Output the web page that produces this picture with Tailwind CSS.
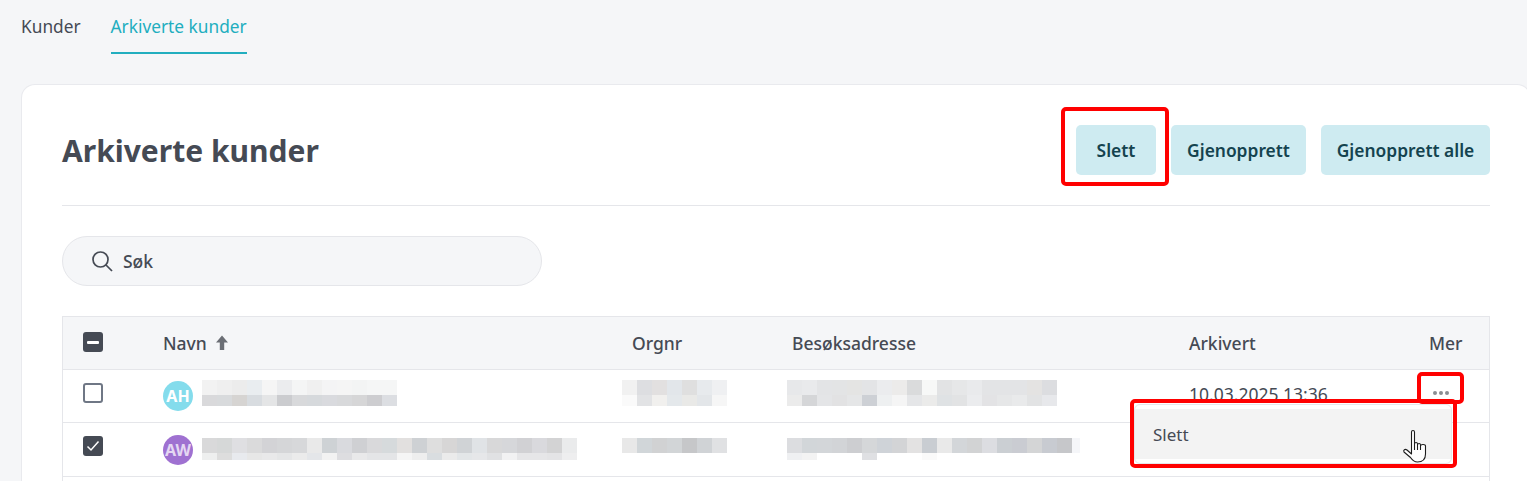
<!DOCTYPE html>
<html lang="nb">
<head>
    <meta charset="UTF-8">
    <title>Arkiverte kunder</title>
    <script src="https://cdn.jsdelivr.net/npm/@tailwindcss/browser@4"></script>
</head>
<body class="relative h-[481px] w-[1527px] overflow-hidden bg-[#f5f6f8] font-['Noto_Sans','Open_Sans',sans-serif] text-[#454a54]">
    <!-- Tabs -->
    <nav class="flex h-[54px] gap-[30px] pl-[21px] text-[17.3px]">
        <a class="pt-[15px] leading-[24px]">Kunder</a>
        <a class="border-b-2 border-[#22aebf] pt-[15px] leading-[24px] text-[#22aebf]">Arkiverte kunder</a>
    </nav>

    <!-- Card -->
    <main class="ml-[21px] mt-[30px] h-[397px] w-[1510px] rounded-t-[14px] border border-b-0 border-[#e9eaee] bg-white px-[40px]">
        <header class="flex h-[121px] items-start justify-between border-b border-[#e5e6ea] pt-[40px]">
            <h1 class="mt-[1px] text-[30px] font-bold leading-[50px]">Arkiverte kunder</h1>
            <div class="flex gap-[15px] text-[17.4px] font-semibold text-[#14434f]">
                <button class="h-[50px] w-[80px] rounded-[5px] bg-[#ceebf1]">Slett</button>
                <button class="h-[50px] w-[135px] rounded-[5px] bg-[#ceebf1]">Gjenopprett</button>
                <button class="h-[50px] w-[169px] rounded-[5px] bg-[#ceebf1]">Gjenopprett alle</button>
            </div>
        </header>

        <div class="mt-[30px] flex h-[50px] w-[480px] items-center rounded-full border border-[#e5e6ea] bg-[#f5f6f8] pl-[28px] text-[17.5px] font-medium">
            <svg class="h-[22px] w-[22px]" viewBox="0 0 22 22" fill="none" stroke="#454a54" stroke-width="1.7"><circle cx="9.5" cy="9.5" r="7.5"/><path d="M15 15l6 6"/></svg>
            <span class="ml-[10px]">Søk</span>
        </div>

        <!-- Table -->
        <section class="mt-[30px] border border-b-0 border-[#e5e6ea] text-[17.5px]">
            <div class="flex h-[53px] items-center border-b border-[#e5e6ea] bg-[#f5f6f8] font-medium">
                <div class="w-[100px] pb-[2px] pl-[20px]">
                    <span class="flex h-5 w-5 items-center justify-center rounded-[3px] bg-[#454a54]"><span class="h-[3px] w-[12px] rounded-[1px] bg-white"></span></span>
                </div>
                <div class="flex w-[469px] items-center">Navn
                    <svg class="ml-[8px] h-[16px] w-[14px]" viewBox="0 0 14 16" fill="#6b6e75"><path d="M7 .5l6 7H9.200V15H4.800V7.500H1z"/></svg>
                </div>
                <div class="w-[160px]">Orgnr</div>
                <div class="w-[397px]">Besøksadresse</div>
                <div class="w-[240px]">Arkivert</div>
                <div>Mer</div>
            </div>
            <div class="flex h-[53px] items-center border-b border-[#e5e6ea]">
                <div class="w-[100px] pb-[6px] pl-[20px]"><span class="block h-5 w-5 rounded-[3px] border-2 border-[#6f7785]"></span></div>
                <div class="flex w-[469px] items-center">
                    <span class="flex h-[30px] w-[30px] shrink-0 items-center justify-center rounded-full bg-[#84dcec] text-[16px] font-bold text-white">AH</span>
                    <div class="ml-[9px] -mt-[6px]" data-mosaic="1"></div>
                </div>
                <div class="w-[160px]"><div class="-ml-[10px] -mt-[6px]" data-mosaic="2"></div></div>
                <div class="w-[397px]"><div class="-ml-[5px] -mt-[6px]" data-mosaic="3"></div></div>
                <div class="w-[240px] pb-[4px]">10.03.2025 13:36</div>
                <div class="flex w-[23px] justify-center gap-[2px] pb-[7px]">
                    <span class="h-[4px] w-[4px] rounded-full bg-[#8a8d92]"></span><span class="h-[4px] w-[4px] rounded-full bg-[#8a8d92]"></span><span class="h-[4px] w-[4px] rounded-full bg-[#8a8d92]"></span>
                </div>
            </div>
            <div class="flex h-[54px] items-center border-b border-[#e5e6ea]">
                <div class="w-[100px] pb-[7px] pl-[20px]">
                    <span class="flex h-5 w-5 items-center justify-center rounded-[3px] bg-[#454a54]">
                        <svg class="h-4 w-4" viewBox="0 0 16 16" fill="none" stroke="#fff" stroke-width="1.500"><path d="M2.500 8.500l3.500 3.500 7.500-8.500"/></svg>
                    </span>
                </div>
                <div class="flex w-[469px] items-center">
                    <span class="flex h-[30px] w-[30px] shrink-0 items-center justify-center rounded-full bg-[#9f71d1] text-[16px] font-bold text-[#e4d7f2]">AW</span>
                    <div class="ml-[9px] -mt-[1px]" data-mosaic="4"></div>
                </div>
                <div class="w-[160px]"><div class="-ml-[10px] -mt-[8px]" data-mosaic="5"></div></div>
                <div class="w-[397px]"><div class="-ml-[5px] -mt-[1px]" data-mosaic="6"></div></div>
            </div>
            <div class="h-[4px]"></div>
        </section>
    </main>

    <!-- Open row menu -->
    <div class="absolute left-[1134px] top-[404px] h-[60px] w-[318px] rounded-[6px] border border-[#e5e6ea] bg-white py-[4px]">
        <div class="flex h-[50px] items-center bg-[#f3f3f3] pl-[18px] pt-[1px] text-[17px]">Slett</div>
    </div>

    <!-- Hand cursor -->
    <svg class="absolute left-[1401px] top-[429px] h-[36px] w-[28px]" viewBox="0 0 28 36" fill="#fff" stroke="#1c1c1c" stroke-width="1.100" stroke-linejoin="round">
        <path d="M10.500 3c0-2 3-2 3 0V15c.2-2 3-2 3 0v1c.2-2 3-2 3 0v1c.2-2 5-1.800 5 0v8c0 5-3 8-8 8-3.500 0-5-1.500-7-4.500L3 23c-1-2 1-3.500 3-2l4.500 4z"/>
        <path d="M13.500 15v6M16.500 16v5M19.500 17v4" fill="none"/>
    </svg>

    <!-- Red annotations -->
    <div class="absolute left-[1061px] top-[107px] h-[79px] w-[108px] rounded-[5px] border-[4px] border-[#ff0000]"></div>
    <div class="absolute left-[1417px] top-[372px] h-[32px] w-[47px] rounded-[5px] border-[4px] border-[#ff0000]"></div>
    <div class="absolute left-[1130px] top-[399px] h-[69px] w-[327px] rounded-[5px] border-[4px] border-[#ff0000]"></div>

    <script>
        // pixelated (anonymised) cells, 15px wide unless a cell says colour:width
        const MOSAICS = {
            1: [[15, 'f2f2f2 efefef ececec e9edf0 f5f5f5 ebecee f4f5f5 f0f0f0 f4f4f5 f5f5f5 f3f4f4 f5f6f6 f5f6f6'], [11, 'd9d9db d8dadc d6d4d2 d8dce0 e4e5e6 cbcccf d8d9db d6d9dc d9dade d8d9db d6d6d7 cdcdd0 dcdee2']],
            2: [[15, 'f1f1f1 dddee1 e2e0e0 e2e6ea dfdfdf e7eaed eff0f2'], [11, 'fafafa e2e3e5 f1f0ee e4e8eb e9e9e7 e3e6e9 f6f6f6']],
            3: [[15, 'e7e8ea e9eaec e3e4e6 e3e4e5 e4e4e3 e3e4e6 ebecee ecebea dadbdc f7f8f7 e2e3e4 e6e7e8 e9eaec e3e4e6 e3e4e6 e3e4e6 e4e3e2 dcdde0'], [11, 'ebebeb d5d6d8 e4e5e7 e2e2e3 e5e6e7 cdd0d5 eef0f1 f5f5f5 e5e6e8 ebebea dfe2e4 e2e3e4 ebecee e3e3e5 e6e7e8 e9eaeb e2e3e4 e7e8eb']],
            4: [[15, 'd9d9da d6d8d8 dfdfe2 dadadb d3d3d6 d5d6d8 d7d8da e9e9e9 ced2d5 d9dade cfd0d3 d9d9db d6dadc e2e0df ced1d4 dedede d7d6d6 d0d3d6 e0e3e6 d8d8d9 d6d7da d1d1d4 d9d9dd d3d3d4 eaebec'], [7, 'eeefef dddddd e8eaee e7e7e7 e9e9ea e5e6e7 ebebeb e4e6e9 f2f2f2 dddde0 e9e9ea e4e5e7 e4e5e7 f5f5f5 eeeeee d9dde0 ebebeb e3e6e8 e6e7e9 e0e1e3 f2f2f3 e6e6e8 e6e6e8 e4e4e6 eeeeef']],
            5: [[15, 'e8e8e8 d1d6d9 d1d2d3 d2d5d7 c6c7c9 d0d3d6 e0e1e3']],
            6: [[15, 'dcdde0 d2d6d9 d3d6d9 d2d4d7 cdced1 d5d7d9 cfd3d8 d3d4d6 e3e2e2 c9cdd2 e9e9e9 d3d6d9 d2d3d4 dcdde1 cbcfd3 caccd2 d4d5d6 c8cbd1 c6c7ca f5f6f9:8'], [7, 'eff0f2 f3f3f3 ffffff ffffff ffffff dfe0e3 ffffff ffffff ffffff fafafa']],
        };

        document.querySelectorAll('[data-mosaic]').forEach(function (el) {
            MOSAICS[el.dataset.mosaic].forEach(function (row) {
                const line = document.createElement('div');
                line.style.display = 'flex';
                row[1].split(' ').forEach(function (c) {
                    const parts = c.split(':');
                    const cell = document.createElement('div');
                    cell.style.width = (parts[1] || 15) + 'px';
                    cell.style.height = row[0] + 'px';
                    cell.style.background = '#' + parts[0];
                    line.appendChild(cell);
                });
                el.appendChild(line);
            });
        });
    </script>
</body>
</html>
